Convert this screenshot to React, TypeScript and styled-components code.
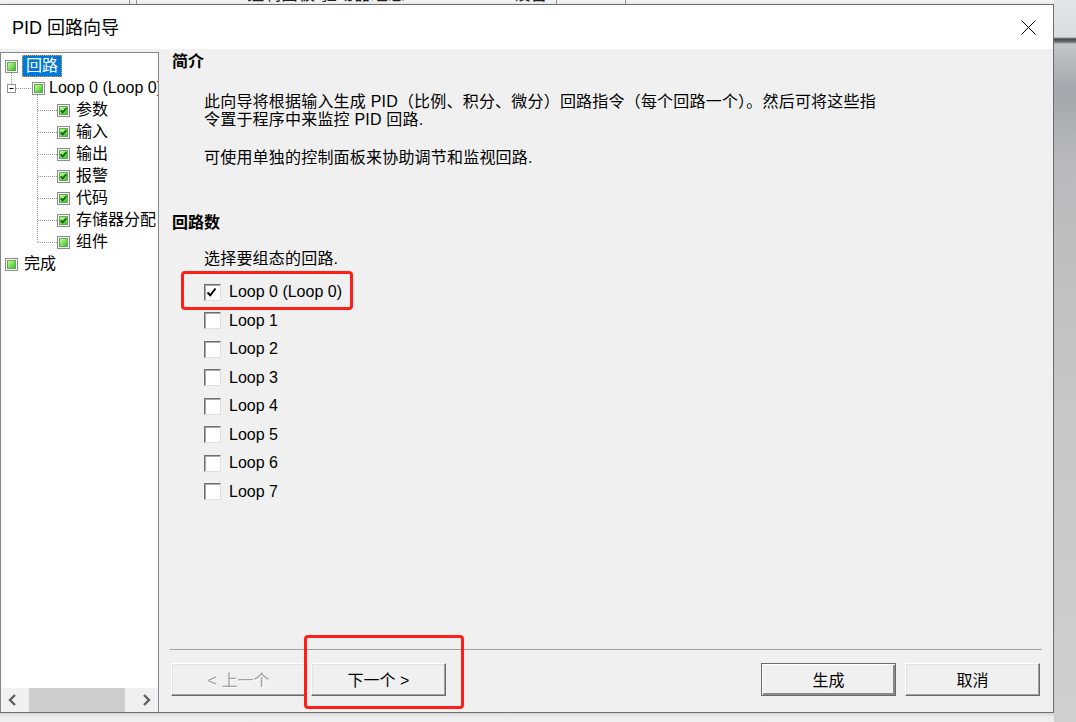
import React from 'react'
import styled, { createGlobalStyle, css } from 'styled-components'

const FONT = `"Liberation Sans", "Noto Sans CJK SC", sans-serif`

const GlobalStyle = createGlobalStyle`
  html, body {
    margin: 0;
    padding: 0;
    background: #e9e9e9;
  }
  body {
    font-family: ${FONT};
    color: #000;
  }
`

const Screen = styled.div`
  width: 1076px;
  height: 722px;
  display: flex;
  overflow: hidden;
  background: #e9e9e9;
`

const MainColumn = styled.div`
  width: 1054px;
  display: flex;
  flex-direction: column;
`

const TopStrip = styled.div`
  height: 4px;
  overflow: hidden;
  background: #f3f3f3;
  display: flex;
  font-size: 17px;
  line-height: 20px;
`

const StripCell = styled.div<{ $w: number }>`
  width: ${(p) => p.$w}px;
  height: 4px;
  overflow: hidden;
  border-right: 1px solid #9a9a9a;
  white-space: nowrap;
  color: #222;
  padding-left: 4px;
  box-sizing: border-box;
`

const StripText = styled.div`
  margin-top: -15px;
`

const RightBackdrop = styled.div`
  flex: 1;
  background: linear-gradient(
    to bottom,
    #e3e6e9 0,
    #d9dde0 37px,
    #454545 39px,
    #707070 42px,
    #c3c6ca 44px,
    #a2a7ad 90px,
    #b7b9bc 160px,
    #c6c6c6 400px,
    #cfcfcf 100%
  );
`

const BottomShade = styled.div`
  flex: 1;
  background: linear-gradient(to bottom, #d6d6d6 0, #ececec 4px, #efefef 100%);
`

const Dialog = styled.div`
  height: 709px;
  box-sizing: border-box;
  border: 1px solid #6d6d6d;
  border-left: none;
  display: flex;
  flex-direction: column;
  background: #f0f0f0;
  box-shadow: 2px 2px 5px rgba(0, 0, 0, 0.25);
`

const TitleBar = styled.div`
  height: 44px;
  background: #fff;
  display: flex;
  align-items: center;
  justify-content: space-between;
  padding: 0 17px 0 12px;
`

const TitleText = styled.div`
  font-size: 18px;
  line-height: 22px;
  margin-top: 1px;
`

const CloseButton = styled.button`
  width: 15px;
  height: 15px;
  padding: 0;
  border: none;
  background: none;
  display: flex;
  margin-top: 1px;
`

const Body = styled.div`
  flex: 1;
  display: flex;
  padding-top: 3px;
  min-height: 0;
`

/* ---------- tree ---------- */

const TreePanel = styled.div`
  width: 159px;
  flex-shrink: 0;
  box-sizing: border-box;
  border: 1px solid #828790;
  border-bottom: none;
  background: #fff;
  display: flex;
  flex-direction: column;
  overflow: hidden;
`

const TreeList = styled.div`
  flex: 1;
  padding-top: 2px;
`

const TreeRow = styled.div`
  height: 22px;
  display: flex;
  align-items: center;
  white-space: nowrap;
  & > svg {
    flex-shrink: 0;
  }
`

const TreeLabel = styled.span<{ $selected?: boolean }>`
  font-size: 16px;
  line-height: 20px;
  padding: 0 3px;
  border: 1px solid transparent;
  flex-shrink: 0;
  ${(p) =>
    p.$selected &&
    css`
      background: #0078d7;
      color: #fff;
      border: 1px dotted #f0a040;
    `}
`

const ScrollBar = styled.div`
  height: 24px;
  display: flex;
  background: #f0f0f0;
`

const ScrollArrow = styled.div`
  width: 24px;
  display: flex;
  align-items: center;
  justify-content: center;
`

const ScrollTrack = styled.div`
  flex: 1;
  display: flex;
`

const ScrollThumb = styled.div`
  width: 96px;
  margin-left: 4px;
  background: #cdcdcd;
`

/* ---------- right pane ---------- */

const RightPane = styled.div`
  flex: 1;
  display: flex;
  flex-direction: column;
  margin-left: 3px;
  padding: 0 11px 16px 8px;
`

const Content = styled.div`
  flex: 1;
  padding-left: 2px;
`

const Heading = styled.div<{ $top: number }>`
  font-size: 16px;
  font-weight: bold;
  line-height: 20px;
  margin-top: ${(p) => p.$top}px;
`

const Para = styled.div<{ $top: number }>`
  font-size: 16px;
  line-height: 18px;
  letter-spacing: 0.2px;
  margin: ${(p) => p.$top}px 0 0 32px;
  white-space: nowrap;
`

const LoopList = styled.div`
  margin: 10px 0 0 32px;
`

const LoopRow = styled.label`
  position: relative;
  height: 28.5px;
  display: flex;
  align-items: center;
  font-size: 16px;
  width: fit-content;
`

const Box = styled.span`
  width: 17px;
  height: 17px;
  box-sizing: border-box;
  background: #fff;
  border: 1px solid;
  border-color: #6f6f6f #e0e0e0 #e0e0e0 #6f6f6f;
  box-shadow: inset 1px 1px 0 #a9a9a9;
  display: flex;
  margin-right: 8px;
`

const RedMark = styled.span<{ $l: number; $t: number; $w: number; $h: number }>`
  position: absolute;
  left: ${(p) => p.$l}px;
  top: ${(p) => p.$t}px;
  width: ${(p) => p.$w}px;
  height: ${(p) => p.$h}px;
  box-sizing: border-box;
  border: 3px solid #fe1f17;
  border-radius: 4px;
  pointer-events: none;
`

const Footer = styled.div`
  border-top: 1px solid #a0a0a0;
  padding: 13px 2px 0 1px;
  display: flex;
  justify-content: space-between;
`

const ButtonGroup = styled.div<{ $gap: number }>`
  display: flex;
  gap: ${(p) => p.$gap}px;
`

const Wrap = styled.span`
  position: relative;
  display: flex;
`

const Button = styled.button<{ $default?: boolean }>`
  width: 135px;
  height: 33px;
  box-sizing: border-box;
  padding: 0 0 2px;
  font-family: ${FONT};
  font-size: 16px;
  color: #000;
  background: #f0f0f0;
  border: 1px solid;
  border-color: #fff #6a6a6a #6a6a6a #fff;
  box-shadow: inset -1px -1px 0 #a0a0a0, inset 1px 1px 0 #e3e3e3;
  ${(p) =>
    p.$default &&
    css`
      border-color: #6a6a6a;
      box-shadow: inset 1px 1px 0 #fff, inset -2px -2px 0 #8a8a8a;
    `}
  &:disabled {
    color: #a0a0a0;
    text-shadow: 1px 1px 0 #fff;
  }
`

/* ---------- drawings ---------- */

function LeafIcon({ x, y, checked }: { x: number; y: number; checked?: boolean }) {
  return (
    <g transform={`translate(${x} ${y})`}>
      <rect x={0.5} y={0.5} width={12} height={12} fill="#fff" stroke="#8c8c8c" />
      <rect x={2.5} y={2.5} width={8} height={8} fill="url(#leafGrad)" stroke="#58b048" />
      {checked && (
        <path d="M3.6 6.4 L5.6 8.4 L9.4 4.2" stroke="#155e15" strokeWidth={1.7} fill="none" />
      )}
    </g>
  )
}

const dots = { stroke: '#9a9a9a', strokeDasharray: '1 1', fill: 'none' }

function RootGlyph({ tail }: { tail?: boolean }) {
  return (
    <svg width={21} height={22}>
      <LeafIcon x={4} y={5} />
      {tail && <line x1={10.5} y1={18} x2={10.5} y2={22} {...dots} />}
    </svg>
  )
}

function LoopGlyph() {
  return (
    <svg width={44} height={22}>
      <line x1={10.5} y1={0} x2={10.5} y2={7} {...dots} />
      <rect x={6.5} y={7.5} width={8} height={8} fill="#fff" stroke="#919191" />
      <line x1={8.5} y1={11.5} x2={12.5} y2={11.5} stroke="#000" />
      <line x1={15} y1={11.5} x2={31} y2={11.5} {...dots} />
      <LeafIcon x={31} y={5} />
      <line x1={36.5} y1={18} x2={36.5} y2={22} {...dots} />
    </svg>
  )
}

function ChildGlyph({ last, checked }: { last?: boolean; checked?: boolean }) {
  return (
    <svg width={71} height={22}>
      <line x1={36.5} y1={0} x2={36.5} y2={last ? 11.5 : 22} {...dots} />
      <line x1={37} y1={11.5} x2={56} y2={11.5} {...dots} />
      <LeafIcon x={56} y={5} checked={checked} />
    </svg>
  )
}

function Chevron({ dir }: { dir: 'left' | 'right' }) {
  const d = dir === 'left' ? 'M11 7 L6 12 L11 17' : 'M7 7 L12 12 L7 17'
  return (
    <svg width={18} height={24} viewBox="0 0 18 24">
      <path d={d} stroke="#606060" strokeWidth={2.4} fill="none" />
    </svg>
  )
}

function CheckBox({ checked }: { checked?: boolean }) {
  return (
    <Box>
      {checked && (
        <svg width={15} height={15} viewBox="0 0 15 15">
          <path d="M2.5 7.5 L5.3 10.3 L10.5 3.5" stroke="#000" strokeWidth={2} fill="none" />
        </svg>
      )}
    </Box>
  )
}

const children = [
  { label: '参数', checked: true },
  { label: '输入', checked: true },
  { label: '输出', checked: true },
  { label: '报警', checked: true },
  { label: '代码', checked: true },
  { label: '存储器分配', checked: true },
  { label: '组件', checked: false }
]

const loops = [0, 1, 2, 3, 4, 5, 6, 7]

export default function App(): JSX.Element {
  return (
    <>
      <GlobalStyle />
      <svg width={0} height={0} style={{ position: 'absolute' }}>
        <defs>
          <linearGradient id="leafGrad" x1="0" y1="0" x2="1" y2="1">
            <stop offset="0" stopColor="#d6fbb4" />
            <stop offset="0.5" stopColor="#82e05e" />
            <stop offset="1" stopColor="#36b336" />
          </linearGradient>
        </defs>
      </svg>
      <Screen>
        <MainColumn>
          <TopStrip>
            <StripCell $w={130} />
            <StripCell $w={7} />
            <StripCell $w={420}>
              <StripText style={{ paddingLeft: 106 }}>控制面板 驱动器组态 ▾ PROFINET 设备</StripText>
            </StripCell>
            <StripCell $w={69} />
          </TopStrip>

          <Dialog>
            <TitleBar>
              <TitleText>PID 回路向导</TitleText>
              <CloseButton aria-label="关闭">
                <svg width={15} height={15} viewBox="0 0 15 15">
                  <path d="M0.5 0.5 L14.5 14.5 M14.5 0.5 L0.5 14.5" stroke="#000" strokeWidth={1} />
                </svg>
              </CloseButton>
            </TitleBar>

            <Body>
              <TreePanel>
                <TreeList>
                  <TreeRow>
                    <RootGlyph tail />
                    <TreeLabel $selected>回路</TreeLabel>
                  </TreeRow>
                  <TreeRow>
                    <LoopGlyph />
                    <TreeLabel>Loop 0 (Loop 0)</TreeLabel>
                  </TreeRow>
                  {children.map((c, i) => (
                    <TreeRow key={c.label}>
                      <ChildGlyph last={i === children.length - 1} checked={c.checked} />
                      <TreeLabel>{c.label}</TreeLabel>
                    </TreeRow>
                  ))}
                  <TreeRow>
                    <svg width={19} height={22}>
                      <LeafIcon x={4} y={5} />
                    </svg>
                    <TreeLabel>完成</TreeLabel>
                  </TreeRow>
                </TreeList>
                <ScrollBar>
                  <ScrollArrow>
                    <Chevron dir="left" />
                  </ScrollArrow>
                  <ScrollTrack>
                    <ScrollThumb />
                  </ScrollTrack>
                  <ScrollArrow>
                    <Chevron dir="right" />
                  </ScrollArrow>
                </ScrollBar>
              </TreePanel>

              <RightPane>
                <Content>
                  <Heading $top={0}>简介</Heading>
                  <Para $top={21}>
                    此向导将根据输入生成 PID（比例、积分、微分）回路指令（每个回路一个）。然后可将这些指
                    <br />
                    令置于程序中来监控 PID 回路.
                  </Para>
                  <Para $top={20}>可使用单独的控制面板来协助调节和监视回路.</Para>

                  <Heading $top={46}>回路数</Heading>
                  <Para $top={17}>选择要组态的回路.</Para>

                  <LoopList>
                    {loops.map((n) => (
                      <LoopRow key={n}>
                        <CheckBox checked={n === 0} />
                        {n === 0 ? 'Loop 0 (Loop 0)' : `Loop ${n}`}
                        {n === 0 && <RedMark $l={-23} $t={-7} $w={172} $h={39} />}
                      </LoopRow>
                    ))}
                  </LoopList>
                </Content>

                <Footer>
                  <ButtonGroup $gap={5}>
                    <Button disabled>&lt; 上一个</Button>
                    <Wrap>
                      <Button>下一个 &gt;</Button>
                      <RedMark $l={-7} $t={-28} $w={160} $h={74} />
                    </Wrap>
                  </ButtonGroup>
                  <ButtonGroup $gap={9}>
                    <Button $default>生成</Button>
                    <Button>取消</Button>
                  </ButtonGroup>
                </Footer>
              </RightPane>
            </Body>
          </Dialog>
          <BottomShade />
        </MainColumn>
        <RightBackdrop />
      </Screen>
    </>
  )
}
